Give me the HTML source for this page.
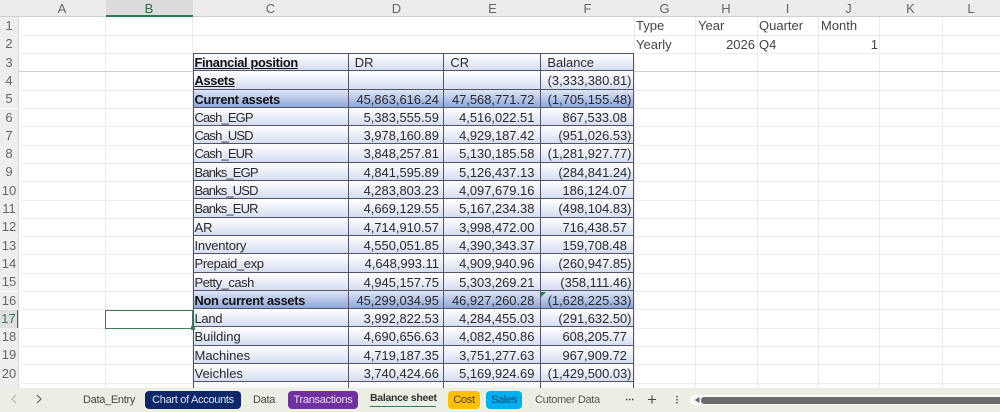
<!DOCTYPE html>
<html><head><meta charset="utf-8">
<style>
html,body{margin:0;padding:0;background:#fff}
#s{position:relative;width:1000px;height:412px;overflow:hidden;background:#fff;font-family:"Liberation Sans",sans-serif;color:#333;filter:blur(.35px)}
.v,.h{position:absolute;background:#ececee}
.v{top:17px;width:1px;height:371px}
.h{left:18px;width:982px;height:1px}
.ch{position:absolute;top:0;height:17px;line-height:18px;font-size:13px;text-align:center;color:#666;background:#ececec}
.rh{position:absolute;left:0;width:18px;height:18.3px;line-height:18.3px;font-size:13px;text-align:center;color:#666;background:#eeeeee}
.t{position:absolute;font-size:13px;line-height:18px;white-space:nowrap;color:#444}
#g{position:absolute;left:192.5px;top:53px;height:335px;width:442px;overflow:hidden;display:grid;grid-template-columns:156.3px 95.6px 97px 92.6px;grid-auto-rows:18.3px}
#g div{box-sizing:border-box;border-right:1px solid #50556a;border-bottom:1px solid #50556a;font-size:12.9px;line-height:19px;white-space:nowrap;color:#2a2a2a;background:linear-gradient(#fbfcfe 10%,#d5ddf1);text-align:right}
#g div:nth-child(4n+1){border-left:1px solid #50556a;text-align:left;padding-left:1px;font-size:13px}
#g div:nth-child(4n+2){padding-right:4.5px}
#g div:nth-child(4n+3){padding-right:6px}
#g div:nth-child(4n+4){padding-right:1.5px}
#g div.n{padding-right:6px}
#g div.b{font-weight:bold;color:#111;font-size:12.8px;letter-spacing:-.3px}
#g .u{text-decoration:underline}
#g .d{background:linear-gradient(#dfe6f6,#8ea6da)}
#g div.top{border-top:1px solid #50556a;line-height:18px}
#g div.l{text-align:left;padding-left:6px;padding-right:0}
#g div.c{letter-spacing:-.85px}
.tab{position:absolute;top:391px;height:18px;line-height:19px;font-size:11px;letter-spacing:-.3px;text-align:center;border-radius:4px;color:#444;white-space:nowrap}
</style></head><body>
<div id="s">
<div class="ch" style="left:0;width:1000px"></div>
<div class="ch" style="left:18.5px;width:87px">A</div>
<div class="ch" style="left:105.5px;width:87px;background:#dcdcdc;color:#2f6b4a;height:15px;border-bottom:2px solid #2f7a52">B</div>
<div class="ch" style="left:192.5px;width:156px">C</div>
<div class="ch" style="left:349px;width:95px">D</div>
<div class="ch" style="left:444px;width:97px">E</div>
<div class="ch" style="left:541px;width:93px">F</div>
<div class="ch" style="left:634px;width:61px">G</div>
<div class="ch" style="left:695px;width:62px">H</div>
<div class="ch" style="left:757px;width:61px">I</div>
<div class="ch" style="left:818px;width:61px">J</div>
<div class="ch" style="left:879px;width:63px">K</div>
<div class="ch" style="left:942px;width:58px">L</div>
<div class="ch" style="left:0;top:16px;width:105px;height:1px;background:#cfcfcf"></div>
<div class="ch" style="left:193px;top:16px;width:807px;height:1px;background:#cfcfcf"></div>

<div class="v" style="left:18px;background:#d6d6d6"></div>
<div class="v" style="left:105px"></div><div class="v" style="left:192px"></div>
<div class="v" style="left:634px"></div><div class="v" style="left:695px"></div><div class="v" style="left:757px"></div><div class="v" style="left:818px"></div><div class="v" style="left:879px"></div><div class="v" style="left:942px"></div>
<div class="h" style="top:35px"></div><div class="h" style="top:53px"></div><div class="h" style="top:71px;left:0;width:1000px;background:#cfcfcf"></div><div class="h" style="top:90px"></div><div class="h" style="top:108px"></div><div class="h" style="top:126px"></div><div class="h" style="top:145px"></div><div class="h" style="top:163px"></div><div class="h" style="top:181px"></div><div class="h" style="top:200px"></div><div class="h" style="top:218px"></div><div class="h" style="top:236px"></div><div class="h" style="top:254px"></div><div class="h" style="top:273px"></div><div class="h" style="top:291px"></div><div class="h" style="top:309px"></div><div class="h" style="top:328px"></div><div class="h" style="top:346px"></div><div class="h" style="top:364px"></div><div class="h" style="top:383px"></div>

<div class="rh" style="top:17px">1</div><div class="rh" style="top:35.3px">2</div><div class="rh" style="top:53.6px">3</div><div class="rh" style="top:71.9px">4</div><div class="rh" style="top:90.2px">5</div><div class="rh" style="top:108.5px">6</div><div class="rh" style="top:126.8px">7</div><div class="rh" style="top:145.1px">8</div><div class="rh" style="top:163.4px">9</div><div class="rh" style="top:181.7px">10</div><div class="rh" style="top:200px">11</div><div class="rh" style="top:218.3px">12</div><div class="rh" style="top:236.6px">13</div><div class="rh" style="top:254.9px">14</div><div class="rh" style="top:273.2px">15</div><div class="rh" style="top:291.5px">16</div><div class="rh" style="top:309.8px;background:#dedede;color:#2f7a52;box-sizing:border-box;border-right:1.5px solid #2f7a52">17</div><div class="rh" style="top:328.1px">18</div><div class="rh" style="top:346.4px">19</div><div class="rh" style="top:364.7px">20</div>
<div class="rh" style="top:383px;height:5px"></div>

<div class="t" style="left:636px;top:17px">Type</div><div class="t" style="left:698px;top:17px">Year</div><div class="t" style="left:759px;top:17px">Quarter</div><div class="t" style="left:821px;top:17px">Month</div>
<div class="t" style="left:636px;top:35.5px">Yearly</div><div class="t" style="left:695px;top:35.5px;width:60px;text-align:right">2026</div><div class="t" style="left:759px;top:35.5px">Q4</div><div class="t" style="left:819px;top:35.5px;width:59px;text-align:right">1</div>

<div id="g">
<div class="b u top">Financial position</div><div class="top l">DR</div><div class="top l">CR</div><div class="top l">Balance</div>
<div class="b u"><span>Assets</span></div><div></div><div></div><div>(3,333,380.81)</div>
<div class="b d">Current assets</div><div class="d">45,863,616.24</div><div class="d">47,568,771.72</div><div class="d">(1,705,155.48)</div>
<div class="c">Cash_EGP</div><div>5,383,555.59</div><div>4,516,022.51</div><div class="n">867,533.08</div>
<div class="c">Cash_USD</div><div>3,978,160.89</div><div>4,929,187.42</div><div>(951,026.53)</div>
<div class="c">Cash_EUR</div><div>3,848,257.81</div><div>5,130,185.58</div><div>(1,281,927.77)</div>
<div class="c">Banks_EGP</div><div>4,841,595.89</div><div>5,126,437.13</div><div>(284,841.24)</div>
<div class="c">Banks_USD</div><div>4,283,803.23</div><div>4,097,679.16</div><div class="n">186,124.07</div>
<div class="c">Banks_EUR</div><div>4,669,129.55</div><div>5,167,234.38</div><div>(498,104.83)</div>
<div>AR</div><div>4,714,910.57</div><div>3,998,472.00</div><div class="n">716,438.57</div>
<div style="letter-spacing:-.2px">Inventory</div><div>4,550,051.85</div><div>4,390,343.37</div><div class="n">159,708.48</div>
<div style="letter-spacing:-.35px">Prepaid_exp</div><div>4,648,993.11</div><div>4,909,940.96</div><div>(260,947.85)</div>
<div style="letter-spacing:-.5px">Petty_cash</div><div>4,945,157.75</div><div>5,303,269.21</div><div>(358,111.46)</div>
<div class="b d">Non current assets</div><div class="d">45,299,034.95</div><div class="d">46,927,260.28</div><div class="d">(1,628,225.33)</div>
<div style="letter-spacing:-.3px">Land</div><div>3,992,822.53</div><div>4,284,455.03</div><div>(291,632.50)</div>
<div>Building</div><div>4,690,656.63</div><div>4,082,450.86</div><div class="n">608,205.77</div>
<div>Machines</div><div>4,719,187.35</div><div>3,751,277.63</div><div class="n">967,909.72</div>
<div>Veichles</div><div>3,740,424.66</div><div>5,169,924.69</div><div>(1,429,500.03)</div>
<div></div><div></div><div></div><div></div>
</div>

<div style="position:absolute;left:541px;top:292px;width:0;height:0;border-top:5px solid #118a3c;border-right:5px solid transparent"></div>
<div style="position:absolute;left:105px;top:309.5px;width:86px;height:17px;border:1.5px solid #3f7a5a"></div>
<div style="position:absolute;left:191px;top:326px;width:4px;height:4px;background:#3f7a5a"></div>

<div style="position:absolute;left:0;top:388px;width:1000px;height:24px;background:#ebeee2"></div>
<svg style="position:absolute;left:0;top:388px" width="60" height="24"><path d="M16 7l-4 4 4 4" fill="none" stroke="#b5b8ae" stroke-width="1.2"/><path d="M37 7l4 4-4 4" fill="none" stroke="#666" stroke-width="1.2"/></svg>
<div class="tab" style="left:83px;width:49px">Data_Entry</div>
<div class="tab" style="left:145px;width:96px;background:#0c2868;color:#dfe6f2">Chart of Accounts</div>
<div class="tab" style="left:253px;width:22px">Data</div>
<div class="tab" style="left:288px;width:70px;background:#7030a0;color:#eadcf4">Transactions</div>
<div class="tab" style="left:370px;width:66px;height:16px;line-height:16px;top:390px;font-weight:bold;font-size:10.5px;letter-spacing:-.3px;border-radius:0;border-bottom:1.5px solid #2f7a62;color:#333">Balance sheet</div>
<div class="tab" style="left:448px;width:32px;background:#ffc000">Cost</div>
<div class="tab" style="left:486px;width:36px;background:#00b0f0;color:#124a78">Sales</div>
<div class="tab" style="left:535px;width:64px;color:#555">Cutomer Data</div>
<svg style="position:absolute;left:620px;top:388px" width="70" height="24"><path d="M6 11.5h1.5M9 11.5h1.5M12 11.5h1.5" stroke="#444" stroke-width="1.6"/><path d="M32 7.5v8M28 11.5h8" stroke="#444" stroke-width="1.1"/><path d="M57 8v1.5M57 11v1.5M57 14v1.5" stroke="#555" stroke-width="1.6"/></svg>
<div style="position:absolute;left:690px;top:395px;width:310px;height:10px;background:#fbfbf9;border-radius:5px 0 0 5px"></div>
<svg style="position:absolute;left:692px;top:395px" width="10" height="10"><path d="M7.5 2v6L2.5 5z" fill="#666"/></svg>
<div style="position:absolute;left:701px;top:397px;width:299px;height:6.5px;background:#6b6b6b;border-radius:3px 0 0 3px"></div>
</div>
</body></html>
